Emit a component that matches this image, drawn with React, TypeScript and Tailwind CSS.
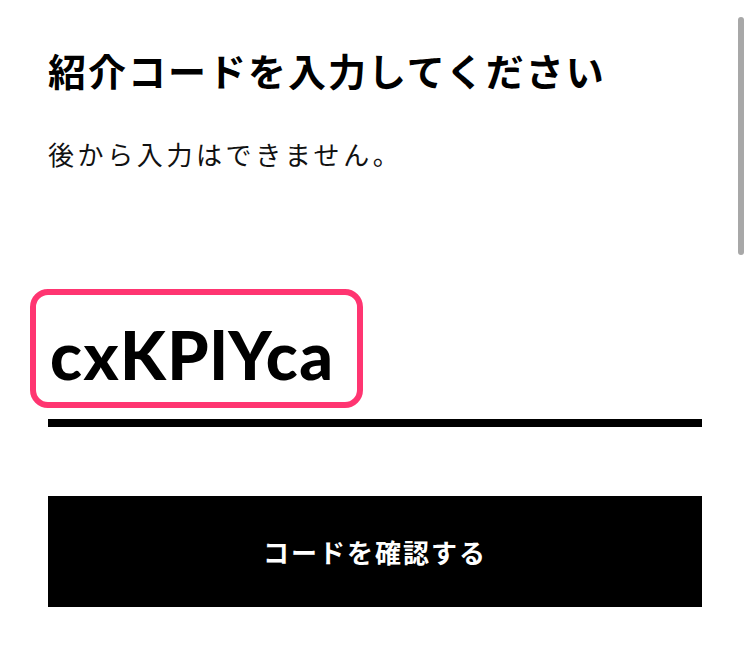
export default function App() {
  return (
    <main className="relative min-h-[650px] w-full bg-white px-[48px] pt-[47px] text-black [font-family:'Noto_Sans_CJK_JP',sans-serif]">
      <div className="w-[654px]">
        <h1 className="text-[38px] leading-[46px] font-bold tracking-[2px] whitespace-nowrap">
          紹介コードを入力してください
        </h1>
        <p className="mt-[43px] text-[26px] leading-[36px] tracking-[3.6px] text-[#111]">
          後から入力はできません。
        </p>

        <div className="relative mt-[144px] border-b-[8px] border-black pb-[26px]">
          <span className="block pl-[2px] text-[66px] leading-[77px] font-black tracking-[1.5px] [font-family:Lato,sans-serif]">
            cxKPlYca
          </span>
          {/* highlight around the entered code */}
          <div className="absolute left-[-18px] top-[-27px] h-[119px] w-[333px] rounded-[18px] border-[6px] border-[#ff3571]" />
        </div>

        <button
          type="button"
          className="mt-[69px] flex h-[111px] w-full items-center justify-center bg-black text-[26px] font-bold tracking-[2px] text-white"
        >
          コードを確認する
        </button>
      </div>

      {/* overlay scrollbar */}
      <div className="absolute right-[6px] top-[17px] h-[238px] w-[6px] rounded-full bg-[#a8a8a8]" />
    </main>
  );
}
